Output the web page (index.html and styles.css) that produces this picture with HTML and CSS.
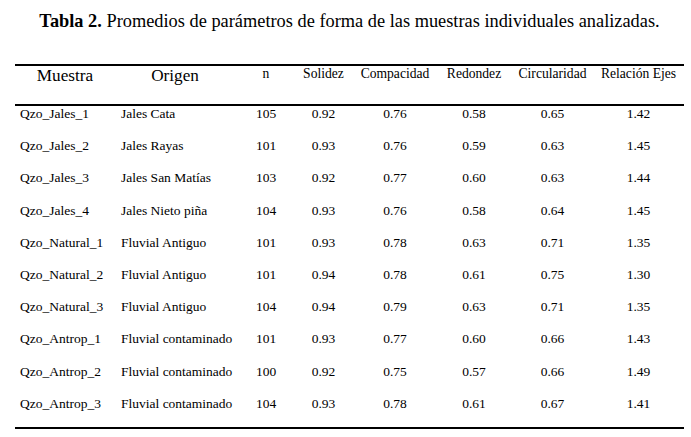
FILE: index.html
```html
<!DOCTYPE html>
<html>
<head>
<meta charset="utf-8">
<title>Tabla 2</title>
<link rel="stylesheet" href="styles.css">
</head>
<body>
<div class="page">
  <p class="caption"><b>Tabla 2.</b> Promedios de parámetros de forma de las muestras individuales analizadas.</p>
  <table class="data">
    <colgroup>
      <col class="c-muestra"><col class="c-origen"><col class="c-n"><col class="c-sol">
      <col class="c-comp"><col class="c-red"><col class="c-circ"><col class="c-rel">
    </colgroup>
    <thead>
      <tr>
        <th class="big">Muestra</th>
        <th class="big">Origen</th>
        <th>n</th>
        <th>Solidez</th>
        <th>Compacidad</th>
        <th>Redondez</th>
        <th>Circularidad</th>
        <th class="last">Relación Ejes</th>
      </tr>
    </thead>
    <tbody>
      <tr><td class="l1">Qzo_Jales_1</td><td class="l2">Jales Cata</td><td>105</td><td>0.92</td><td>0.76</td><td>0.58</td><td>0.65</td><td class="last">1.42</td></tr>
      <tr><td class="l1">Qzo_Jales_2</td><td class="l2">Jales Rayas</td><td>101</td><td>0.93</td><td>0.76</td><td>0.59</td><td>0.63</td><td class="last">1.45</td></tr>
      <tr><td class="l1">Qzo_Jales_3</td><td class="l2">Jales San Matías</td><td>103</td><td>0.92</td><td>0.77</td><td>0.60</td><td>0.63</td><td class="last">1.44</td></tr>
      <tr><td class="l1">Qzo_Jales_4</td><td class="l2">Jales Nieto piña</td><td>104</td><td>0.93</td><td>0.76</td><td>0.58</td><td>0.64</td><td class="last">1.45</td></tr>
      <tr><td class="l1">Qzo_Natural_1</td><td class="l2">Fluvial Antiguo</td><td>101</td><td>0.93</td><td>0.78</td><td>0.63</td><td>0.71</td><td class="last">1.35</td></tr>
      <tr><td class="l1">Qzo_Natural_2</td><td class="l2">Fluvial Antiguo</td><td>101</td><td>0.94</td><td>0.78</td><td>0.61</td><td>0.75</td><td class="last">1.30</td></tr>
      <tr><td class="l1">Qzo_Natural_3</td><td class="l2">Fluvial Antiguo</td><td>104</td><td>0.94</td><td>0.79</td><td>0.63</td><td>0.71</td><td class="last">1.35</td></tr>
      <tr><td class="l1">Qzo_Antrop_1</td><td class="l2">Fluvial contaminado</td><td>101</td><td>0.93</td><td>0.77</td><td>0.60</td><td>0.66</td><td class="last">1.43</td></tr>
      <tr><td class="l1">Qzo_Antrop_2</td><td class="l2">Fluvial contaminado</td><td>100</td><td>0.92</td><td>0.75</td><td>0.57</td><td>0.66</td><td class="last">1.49</td></tr>
      <tr class="end"><td class="l1">Qzo_Antrop_3</td><td class="l2">Fluvial contaminado</td><td>104</td><td>0.93</td><td>0.78</td><td>0.61</td><td>0.67</td><td class="last">1.41</td></tr>
    </tbody>
  </table>
</div>
</body>
</html>
```
FILE: styles.css
```css
html, body {
  margin: 0;
  background: #fff;
}
body {
  font-family: "Liberation Serif", "Times New Roman", serif;
  color: #000;
}
.page {
  width: 669px;
  padding-left: 15px;
}
.caption {
  margin: 0;
  padding-top: 10px;
  font-size: 18.35px;
  line-height: 22px;
  text-align: center;
}
.caption b {
  font-weight: bold;
}
.data {
  margin-top: 32px;
  width: 669px;
  table-layout: fixed;
  border-collapse: separate;
  border-spacing: 0;
}
.c-muestra { width: 100px; }
.c-origen { width: 120px; }
.c-n { width: 62px; }
.c-sol { width: 53px; }
.c-comp { width: 90px; }
.c-red { width: 68px; }
.c-circ { width: 89px; }
.c-rel { width: 87px; }

.data th {
  font-weight: normal;
  font-size: 13.6px;
  line-height: 16px;
  vertical-align: top;
  text-align: center;
  padding: 0 0 22px 0;
  border-top: 2px solid #000;
  border-bottom: 2px solid #000;
  white-space: nowrap;
}
.data th.big {
  font-size: 17.2px;
  line-height: 20px;
  padding-bottom: 18px;
}
.data td {
  font-size: 13.5px;
  line-height: 16px;
  vertical-align: top;
  text-align: center;
  padding: 0 0 16.2px 0;
  white-space: nowrap;
}
.data .last {
  padding-right: 4px;
}
.data td.l1 {
  text-align: left;
  padding-left: 5px;
}
.data td.l2 {
  text-align: left;
  padding-left: 6px;
}
.data tr.end td {
  padding-bottom: 15px;
  border-bottom: 2px solid #000;
}
```
